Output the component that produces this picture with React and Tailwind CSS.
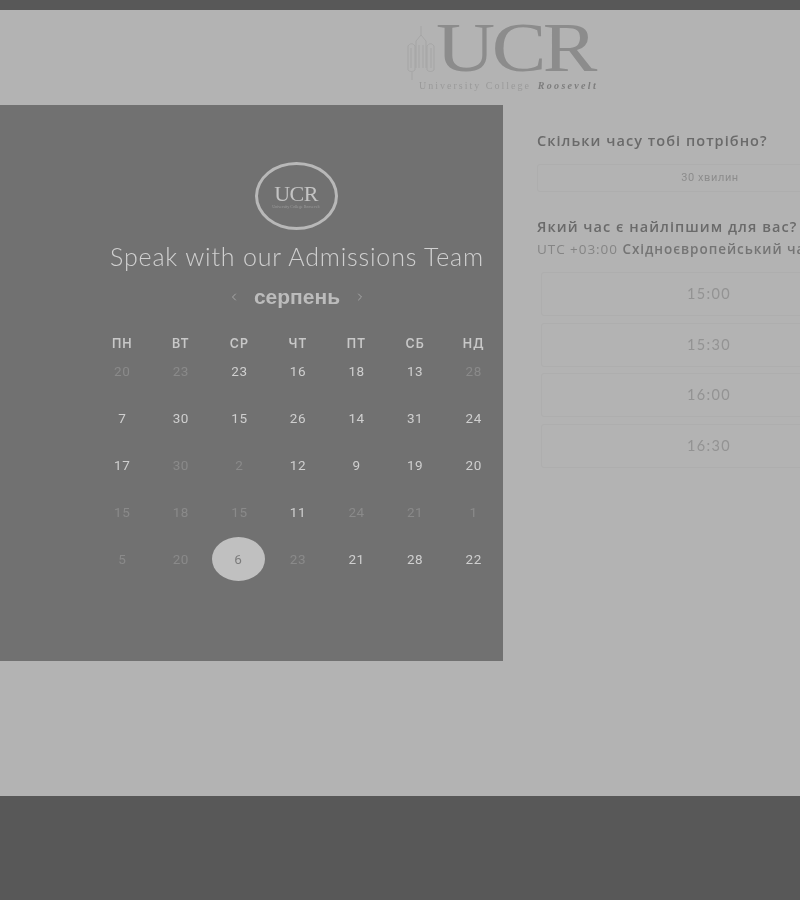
import React from "react";
import { ChevronLeft, ChevronRight } from "lucide-react";

const WEEK = ["ПН", "ВТ", "СР", "ЧТ", "ПТ", "СБ", "НД"];
const DAYS = [
  ["20", 0], ["23", 0], ["23", 1], ["16", 1], ["18", 1], ["13", 1], ["28", 0],
  ["7", 1], ["30", 1], ["15", 1], ["26", 1], ["14", 1], ["31", 1], ["24", 1],
  ["17", 1], ["30", 0], ["2", 0], ["12", 1], ["9", 1], ["19", 1], ["20", 1],
  ["15", 0], ["18", 0], ["15", 0], ["11", 1], ["24", 0], ["21", 0], ["1", 0],
  ["5", 0], ["20", 0], ["6", 2], ["23", 0], ["21", 1], ["28", 1], ["22", 1],
];
const TIMES = ["15:00", "15:30", "16:00", "16:30"];

function Tower() {
  return (
    <svg width="30" height="54" viewBox="0 0 30 54" fill="none" stroke="#a0a0a0" strokeWidth="0.7" className="shrink-0">
      <path d="M14 0V9M9 15L14 9L19 15M9 15V42M19 15V42M12 19V42M16 19V42" />
      <path d="M1 20C3 17 6 17 8 20V44C6 46 3 46 1 44Z" />
      <path d="M20 20C22 17 25 17 27 20V44C25 46 22 46 20 44Z" />
      <path d="M4 22V42M24 22V42M5 46V54" />
    </svg>
  );
}

export default function App() {
  return (
    <div className="w-[800px] h-[900px] overflow-hidden flex flex-col bg-[#585858] blur-[0.55px] font-['Open_Sans',sans-serif]">
      <div className="h-[10px] shrink-0 bg-[#585858]" />
      <div className="h-[786px] shrink-0 bg-[#b3b3b3] flex flex-col">
        <header className="h-[95px] shrink-0 pl-[407px]">
          <div className="flex items-start h-[70px]">
            <div className="mt-[16px]"><Tower /></div>
            <span className="font-['Liberation_Serif',serif] text-[70px] leading-[76px] tracking-[-3px] text-[#8c8c8c] -ml-[1px] origin-left scale-x-[1.17] inline-block">UCR</span>
          </div>
          <div className="ml-[12px] flex items-baseline gap-[7px] font-['Liberation_Serif',serif] text-[10px] leading-[12px] tracking-[2px] text-[#9a9a9a] whitespace-nowrap">
            <span>University College</span>
            <span className="italic font-bold text-[#7d7d7d] tracking-[2.3px]">Roosevelt</span>
          </div>
        </header>

        <main className="flex items-start">
          <section className="w-[503px] h-[556px] shrink-0 bg-[#717171] pl-[91px] pt-[57px] flex flex-col items-center">
            <div className="-translate-x-px w-[83px] h-[68px] rounded-[50%] border-[3px] border-[#b8b8b8] flex flex-col items-center justify-center">
              <span className="font-['Liberation_Serif',serif] text-[22px] leading-[20px] tracking-[-0.5px] text-[#c4c4c4]">UCR</span>
              <span className="font-['Liberation_Serif',serif] text-[4px] leading-[5px] text-[#9c9c9c] whitespace-nowrap">University College Roosevelt</span>
            </div>
            <h1 className="mt-[9px] font-['Lato',sans-serif] font-light text-[25px] leading-[34px] tracking-[0.82px] text-[#d0d0d0] whitespace-nowrap">
              Speak with our Admissions Team
            </h1>
            <div className="mt-[10px] flex items-center gap-[14px] h-[28px]">
              <ChevronLeft size={12} className="text-[#a8a8a8]" />
              <span className="font-['Liberation_Sans',sans-serif] font-bold text-[21px] leading-[28px] text-[#bcbcbc]">серпень</span>
              <ChevronRight size={12} className="text-[#a8a8a8]" />
            </div>
            <div className="mt-[23px] pl-[2px] w-full grid grid-cols-7 text-center">
              {WEEK.map((d) => (
                <div key={d} className="h-[20px] leading-[20px] font-['Inter',sans-serif] font-semibold text-[12.5px] tracking-[1px] text-[#c8c8c8]">{d}</div>
              ))}
            </div>
            <div className="mt-[6px] pl-[2px] w-full grid grid-cols-7 auto-rows-[47px] text-center font-['Roboto',sans-serif] text-[13.5px] tracking-[0.6px]">
              {DAYS.map(([n, s], i) => (
                <div key={i} className="flex items-start justify-center">
                  {s === 2 ? (
                    <span className="mt-[-11px] -translate-x-px w-[53px] h-[44px] rounded-[50%] bg-[#c0c0c0] text-[#7c7c7c] flex items-center justify-center">{n}</span>
                  ) : (
                    <span className={s === 1 ? "leading-[22px] text-[#cfcfcf]" : "leading-[22px] text-[#8a8a8a]"}>{n}</span>
                  )}
                </div>
              ))}
            </div>
          </section>

          <section className="w-[346px] shrink-0 ml-[34px] pt-[26px]">
            <h2 className="font-['Open_Sans',sans-serif] font-semibold text-[14.5px] leading-[20px] tracking-[1.05px] text-[#6a6a6a] whitespace-nowrap">Скільки часу тобі потрібно?</h2>
            <div className="mt-[13px] h-[28px] rounded-[3px] border border-[#aeaeae] flex items-center justify-center font-['Roboto',sans-serif] text-[11px] tracking-[0.6px] text-[#8c8c8c]">30 хвилин</div>
            <h2 className="mt-[25px] font-['Open_Sans',sans-serif] font-semibold text-[14.5px] leading-[20px] tracking-[1.05px] text-[#6a6a6a] whitespace-nowrap">Який час є найліпшим для вас?</h2>
            <p className="mt-[3px] font-['Open_Sans',sans-serif] text-[13.5px] leading-[18px] tracking-[0.95px] text-[#858585] whitespace-nowrap">
              UTC +03:00 <span className="font-semibold text-[#747474]">Східноєвропейський час</span>
            </p>
            <div className="mt-[14px] ml-[4px] w-[336px] flex flex-col gap-[6.5px]">
              {TIMES.map((t) => (
                <div key={t} className="h-[44px] rounded-[3px] border border-[#aeaeae] flex items-center justify-center font-['Lato',sans-serif] text-[14.5px] tracking-[1.3px] text-[#939393]">{t}</div>
              ))}
            </div>
          </section>
        </main>
      </div>
      <div className="flex-1 bg-[#585858]" />
    </div>
  );
}
